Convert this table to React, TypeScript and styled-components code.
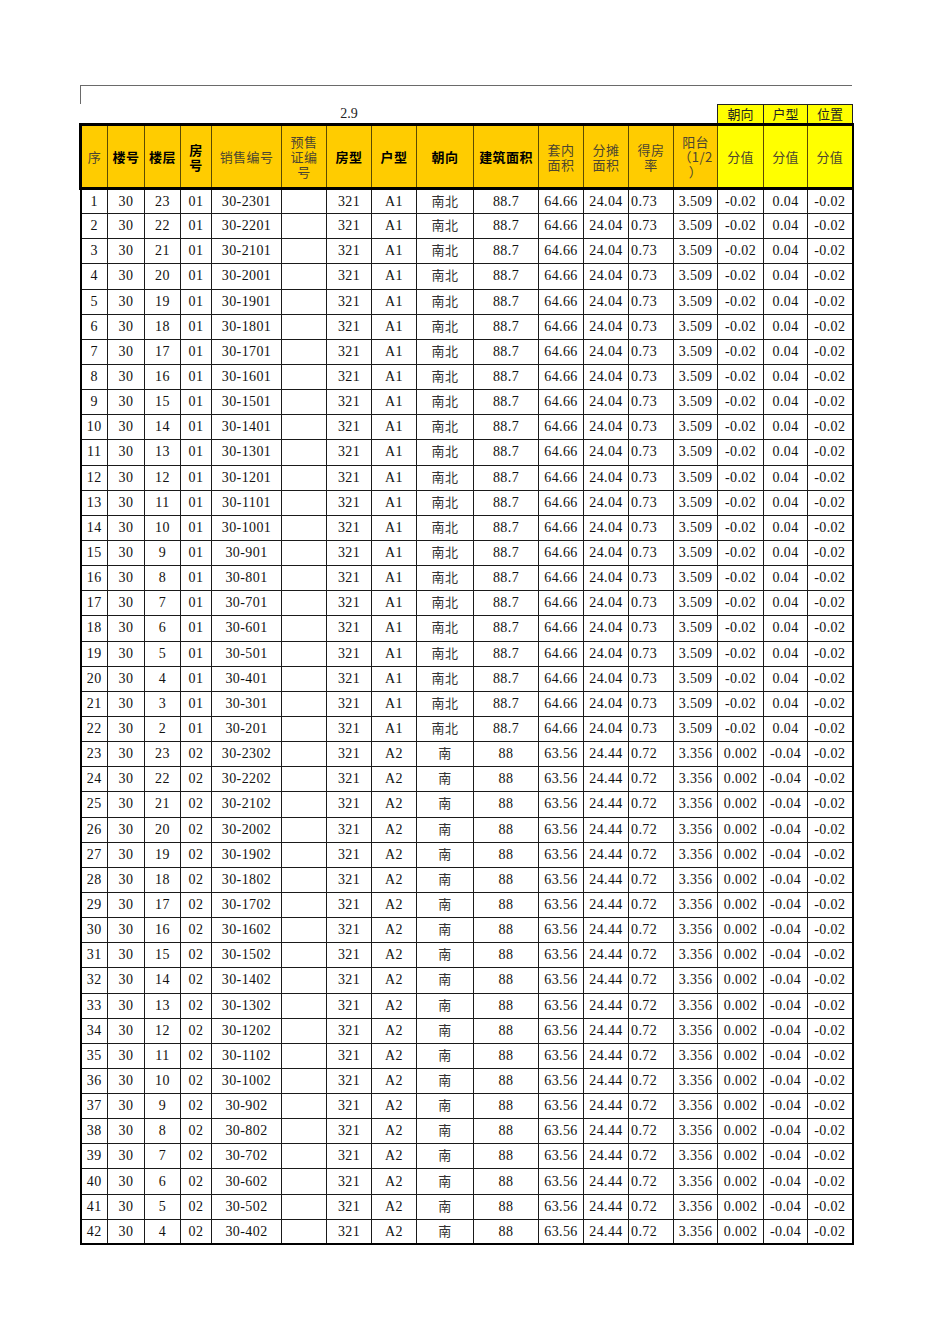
import React from "react";
import styled, { createGlobalStyle } from "styled-components";

const Global = createGlobalStyle`
  html, body { margin: 0; padding: 0; background: #fff; }
  body { font-family: "Liberation Serif", "Noto Sans CJK SC", serif; }
`;

const Page = styled.div`
  width: 950px;
  min-height: 1344px;
  background: #fff;
  padding-top: 85px;
  box-sizing: border-box;
`;

const Wrap = styled.div`
  margin-left: 80px;
  width: 772px;
`;

const TitleBar = styled.div`
  height: 19px;
  border-top: 1px solid #6a6a6a;
  border-left: 1px solid #6a6a6a;
  box-sizing: border-box;
  width: 772px;
`;

const Sheet = styled.table`
  border-collapse: collapse;
  table-layout: fixed;
  width: 771px;
  margin-left: -1px;
  font-family: "Liberation Serif", "Noto Sans CJK SC", serif;
  font-size: 14px;
  color: #111;
`;

const SubRow = styled.tr`
  height: 20px;
`;

const SubCell = styled.td<{ $tag?: boolean }>`
  padding: 0;
  text-align: center;
  font-family: ${(p) => (p.$tag ? '"Noto Sans CJK SC", sans-serif' : '"Liberation Serif", serif')};
  font-size: ${(p) => (p.$tag ? "13px" : "14px")};
  line-height: 18px;
  color: #222;
  background: ${(p) => (p.$tag ? "#ffff00" : "transparent")};
  border: ${(p) => (p.$tag ? "1px solid #222" : "none")};
`;

const HeadRow = styled.tr`
  height: 64px;
`;

const HeadCell = styled.th<{ $bold?: boolean; $yellow?: boolean }>`
  padding: 0;
  text-align: center;
  vertical-align: middle;
  font-family: "Noto Sans CJK SC", "Liberation Serif", sans-serif;
  font-size: 13px;
  line-height: 15px;
  letter-spacing: 0.4px;
  font-weight: ${(p) => (p.$bold ? 700 : 400)};
  color: ${(p) => (p.$bold ? "#000" : "#4d4630")};
  background: ${(p) => (p.$yellow ? "#ffff00" : "#ffcc00")};
  border-left: 1px solid #5c4b00;
  border-right: 1px solid #5c4b00;
  border-top: 3px solid #000;
  border-bottom: 3px solid #000;
  white-space: nowrap;
  &:first-child { border-left: 3px solid #000; }
  &:last-child { border-right: 2px solid #000; }
`;

const Line = styled.span`
  display: block;
  height: 15px;
`;

const BodyRow = styled.tr`
  height: 25.15px;
`;

const Cell = styled.td<{ $left?: boolean; $cjk?: boolean }>`
  padding: 0 ${(p) => (p.$left ? "2px" : "0")} ${(p) => (p.$cjk ? "2px" : "0")};
  text-align: ${(p) => (p.$left ? "left" : "center")};
  vertical-align: middle;
  white-space: nowrap;
  overflow: hidden;
  font-family: ${(p) => (p.$cjk ? '"Noto Sans CJK SC", sans-serif' : '"Liberation Serif", serif')};
  font-size: ${(p) => (p.$cjk ? "13px" : "14px")};
  line-height: 16px;
  letter-spacing: ${(p) => (p.$cjk ? "0.5px" : "0.4px")};
  color: ${(p) => (p.$cjk ? "#333" : "#111")};
  border: 1px solid #1a1a1a;
  &:first-child { border-left: 2px solid #000; }
  &:last-child { border-right: 2px solid #000; }
`;

const Body = styled.tbody`
  tr:last-child td { border-bottom: 2px solid #000; }
`;

const widths = [27, 37, 36, 31, 70, 45, 45, 45, 57, 65, 45, 45, 45, 44, 46, 44, 45];

const headers: { t: string[]; bold?: boolean; yellow?: boolean }[] = [
  { t: ["序"] },
  { t: ["楼号"], bold: true },
  { t: ["楼层"], bold: true },
  { t: ["房", "号"], bold: true },
  { t: ["销售编号"] },
  { t: ["预售", "证编", "号"] },
  { t: ["房型"], bold: true },
  { t: ["户型"], bold: true },
  { t: ["朝向"], bold: true },
  { t: ["建筑面积"], bold: true },
  { t: ["套内", "面积"] },
  { t: ["分摊", "面积"] },
  { t: ["得房", "率"] },
  { t: ["阳台", "（1/2", "）"] },
  { t: ["分值"], yellow: true },
  { t: ["分值"], yellow: true },
  { t: ["分值"], yellow: true },
];

type Row = string[];

const rows: Row[] = [];
for (let i = 0; i < 22; i++) {
  const floor = 23 - i;
  rows.push([
    String(i + 1), "30", String(floor), "01", `30-${floor}01`, "", "321", "A1", "南北",
    "88.7", "64.66", "24.04", "0.73", "3.509", "-0.02", "0.04", "-0.02",
  ]);
}
for (let i = 0; i < 20; i++) {
  const floor = 23 - i;
  rows.push([
    String(i + 23), "30", String(floor), "02", `30-${floor}02`, "", "321", "A2", "南",
    "88", "63.56", "24.44", "0.72", "3.356", "0.002", "-0.04", "-0.02",
  ]);
}

export default function App() {
  return (
    <Page>
      <Global />
      <Wrap>
        <TitleBar />
        <Sheet>
          <colgroup>
            {widths.map((w, i) => (
              <col key={i} style={{ width: w }} />
            ))}
          </colgroup>
          <thead>
            <SubRow>
              <SubCell colSpan={6} />
              <SubCell>2.9</SubCell>
              <SubCell colSpan={7} />
              <SubCell $tag>朝向</SubCell>
              <SubCell $tag>户型</SubCell>
              <SubCell $tag>位置</SubCell>
            </SubRow>
            <HeadRow>
              {headers.map((h, i) => (
                <HeadCell key={i} $bold={h.bold} $yellow={h.yellow}>
                  {h.t.map((l, li) => (
                    <Line key={li}>{l}</Line>
                  ))}
                </HeadCell>
              ))}
            </HeadRow>
          </thead>
          <Body>
            {rows.map((r, ri) => (
              <BodyRow key={ri}>
                {r.map((v, ci) => (
                  <Cell key={ci} $left={ci === 12} $cjk={ci === 8}>
                    {v}
                  </Cell>
                ))}
              </BodyRow>
            ))}
          </Body>
        </Sheet>
      </Wrap>
    </Page>
  );
}
